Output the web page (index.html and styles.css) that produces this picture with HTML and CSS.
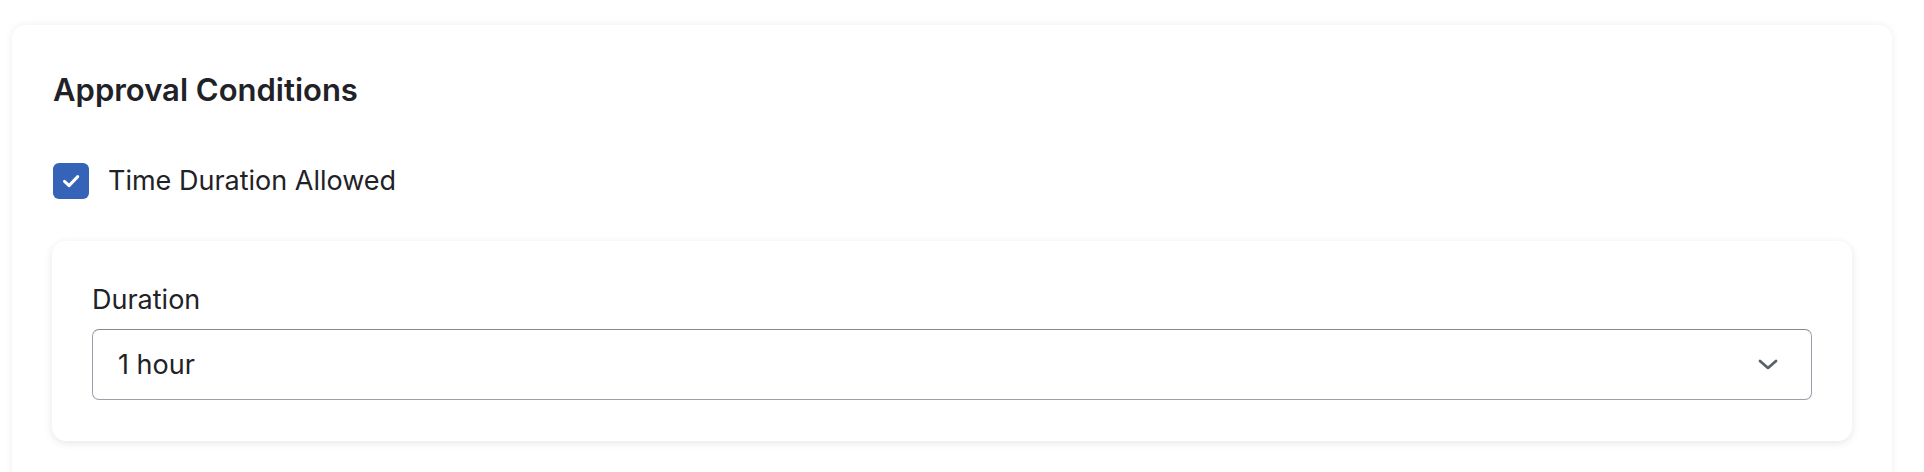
FILE: index.html
```html
<!DOCTYPE html>
<html>
<head>
<meta charset="utf-8">
<link rel="stylesheet" href="styles.css">
</head>
<body>
<div class="page">
  <section class="card">
    <h2 class="title">Approval Conditions</h2>
    <label class="check-row">
      <span class="checkbox">
        <svg viewBox="0 0 36 36" width="36" height="36"><path d="M11.5 18.3l4.6 4.3 8.6-9" fill="none" stroke="#fff" stroke-width="3" stroke-linecap="round" stroke-linejoin="round"/></svg>
      </span>
      <span class="check-label">Time Duration Allowed</span>
    </label>
    <div class="subcard">
      <div class="field-label">Duration</div>
      <div class="select">
        <span class="select-value">1 hour</span>
        <svg class="chevron" viewBox="0 0 20 11" width="20" height="11"><path d="M2 2l8 7 8-7" fill="none" stroke="#5b616b" stroke-width="2.8" stroke-linecap="round" stroke-linejoin="round"/></svg>
      </div>
    </div>
  </section>
</div>
</body>
</html>
```

FILE: styles.css
```css
html, body {
  margin: 0;
  padding: 0;
  background: #ffffff;
}
body {
  font-family: Inter, "Noto Sans", sans-serif;
  color: #1f2227;
}
.page {
  padding: 25px 32px 0 12px;
}
.card {
  background: #ffffff;
  border-radius: 14px;
  box-shadow: 0 0 8px rgba(0, 0, 0, 0.07);
  padding: 45px 40px 60px 41px;
}
.title {
  margin: 0;
  font-size: 31px;
  font-weight: 600;
  line-height: 40px;
  letter-spacing: 0;
}
.check-row {
  display: flex;
  align-items: center;
  gap: 19px;
  margin-top: 53px;
}
.checkbox {
  width: 36px;
  height: 36px;
  border-radius: 6px;
  background: #3563b8;
  display: flex;
  align-items: center;
  justify-content: center;
}
.checkbox svg {
  width: 36px;
  height: 36px;
}
.check-label {
  font-size: 27px;
  line-height: 36px;
}
.subcard {
  margin-top: 42px;
  margin-left: -1px;
  border-radius: 14px;
  background: #ffffff;
  box-shadow: 0 2px 8px rgba(0, 0, 0, 0.1);
  padding: 42px 40px 41px 40px;
}
.field-label {
  font-size: 27px;
  line-height: 34px;
  margin-bottom: 12px;
}
.select {
  height: 71px;
  box-sizing: border-box;
  border: 1.5px solid #9ba0aa;
  border-top-color: #868b93;
  border-radius: 7px;
  display: flex;
  align-items: center;
  justify-content: space-between;
  padding: 0 33px 0 25px;
}
.select-value {
  font-size: 27px;
}
.chevron {
  width: 20px;
  height: 11px;
}
```
